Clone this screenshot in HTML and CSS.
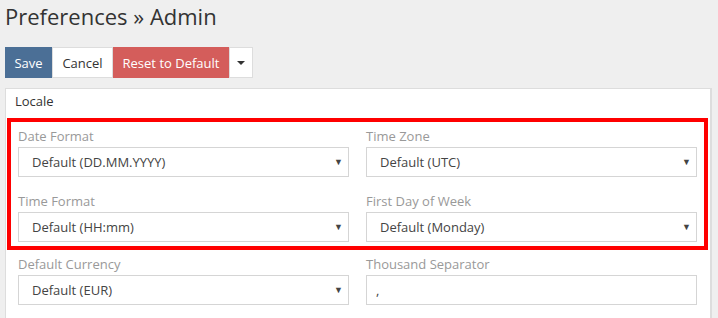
FILE: index.html
```html
<!DOCTYPE html>
<html lang="en">
<head>
  <meta charset="UTF-8" />
  <title>Preferences » Admin</title>
  <link rel="stylesheet" href="styles.css">
</head>
<body>
  <div class="page">
    <h1>Preferences » Admin</h1>

    <div class="toolbar">
      <button class="btn btn-save">Save</button>
      <button class="btn btn-plain">Cancel</button>
      <button class="btn btn-reset">Reset to Default</button>
      <button class="btn btn-plain btn-caret"><span class="caret"></span></button>
    </div>

    <div class="panel">
      <div class="panel-head">Locale</div>

      <div class="highlight">
        <div class="row">
          <div class="field">
            <div class="label">Date Format</div>
            <div class="select">Default (DD.MM.YYYY)<span class="arrow">▼</span></div>
          </div>
          <div class="field">
            <div class="label">Time Zone</div>
            <div class="select">Default (UTC)<span class="arrow">▼</span></div>
          </div>
        </div>
        <div class="row">
          <div class="field">
            <div class="label">Time Format</div>
            <div class="select">Default (HH:mm)<span class="arrow">▼</span></div>
          </div>
          <div class="field">
            <div class="label">First Day of Week</div>
            <div class="select">Default (Monday)<span class="arrow">▼</span></div>
          </div>
        </div>
      </div>

      <div class="row row-plain">
        <div class="field">
          <div class="label">Default Currency</div>
          <div class="select">Default (EUR)<span class="arrow">▼</span></div>
        </div>
        <div class="field">
          <div class="label">Thousand Separator</div>
          <div class="input">,</div>
        </div>
      </div>
    </div>
  </div>
</body>
</html>
```

FILE: styles.css
```css
html, body {
  margin: 0;
  padding: 0;
  background-color: #efefef;
  font-family: "Open Sans", sans-serif;
  color: #333;
  overflow: hidden;
}

.page {
  padding: 0 6px 0 5px;
}

h1 {
  margin: 0;
  font-size: 22px;
  line-height: 32px;
  font-weight: 400;
  color: #333;
}

.toolbar {
  display: flex;
  margin-top: 15px;
  height: 31px;
}

.btn {
  font-family: "Open Sans", sans-serif;
  font-size: 13px;
  height: 31px;
  border: 1px solid #ddd;
  margin: 0;
  padding: 0;
  cursor: pointer;
}

.btn-save {
  width: 47px;
  background-color: #4b6f96;
  border-color: #4b6f96;
  color: #fff;
}

.btn-plain {
  width: 61px;
  background-color: #fff;
  color: #333;
}

.btn-reset {
  width: 116px;
  background-color: #d45d5b;
  border-color: #d45d5b;
  color: #fff;
}

.btn-caret {
  width: 24px;
  display: flex;
  align-items: center;
  justify-content: center;
}

.caret {
  width: 0;
  height: 0;
  border-left: 4px solid transparent;
  border-right: 4px solid transparent;
  border-top: 4px solid #333;
}

.panel {
  margin-top: 10px;
  background-color: #fff;
  border: 1px solid #ddd;
  border-right-width: 2px;
  height: 240px;
}

.panel-head {
  font-size: 13px;
  line-height: 20px;
  padding: 2px 9px 7px;
  color: #333;
}

.highlight {
  margin: 0 2px 0 1px;
  border: 4px solid #ff0000;
  padding: 4px 7px 4px 7px;
}

.row {
  display: flex;
  gap: 17px;
}

.row + .row {
  margin-top: 14px;
}

.row-plain {
  padding: 4px 13px 0 12px;
}

.field {
  flex: 1;
}

.label {
  font-size: 13px;
  line-height: 20px;
  color: #999;
  margin-bottom: 1px;
}

.select, .input {
  box-sizing: border-box;
  height: 30px;
  border: 1px solid #d5d5d5;
  padding: 0 30px 0 13px;
  font-size: 13px;
  line-height: 28px;
  color: #444;
  position: relative;
}

.input {
  padding-left: 9px;
}

.arrow {
  position: absolute;
  right: 5px;
  top: 0;
  font-size: 9px;
  color: #444;
}
```
